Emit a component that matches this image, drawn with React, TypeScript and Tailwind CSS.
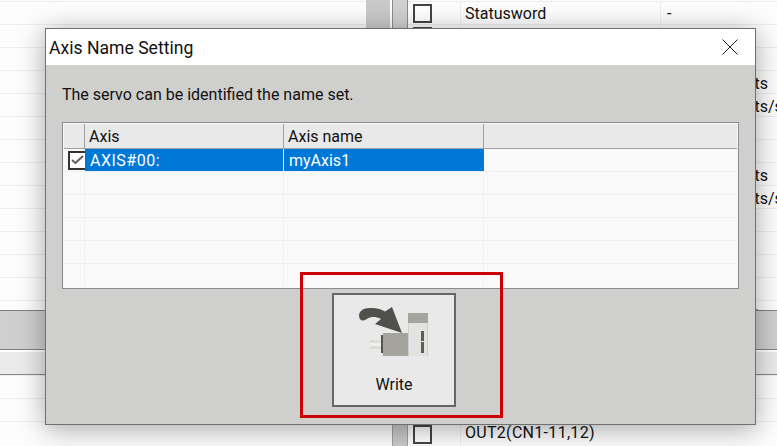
const FONT = "[font-family:Roboto,'Liberation_Sans',sans-serif]";

const TOP_ROWS: Record<number, string> = { 0: "Statusword" };
const UNIT_ROWS: Record<number, string> = { 3: "", 4: "/s", 7: "", 8: "/s" };

function Box() {
  return <span className="block h-[19px] w-[19px] border-2 border-[#444444] bg-white" />;
}

function SideRows({ count, first }: { count: number; first?: boolean }) {
  return (
    <div className={first ? "pt-px" : ""}>
      {Array.from({ length: count }).map((_, i) => (
        <div key={i} className="h-[23px] border-t border-[#eeeeee]" />
      ))}
    </div>
  );
}

function BackgroundTop() {
  return (
    <div className="flex h-[310px] overflow-hidden bg-[#fdfdfd]">
      <div className="w-[366px] shrink-0">
        <SideRows count={14} first />
      </div>
      <div className="w-[24px] shrink-0 bg-[#c9c9c9]" />
      <div className="w-[2px] shrink-0 bg-white" />
      <div className="w-[16px] shrink-0 border-x border-[#8d8d8d] bg-[#d0d0d0]" />
      <div className="w-[369px] shrink-0 pt-px">
        {Array.from({ length: 13 }).map((_, i) => (
          <div key={i} className={`flex h-[23px] border-t border-[#eeeeee] text-[16px] text-[#111111] ${i === 0 ? "leading-[24px]" : "leading-[26px]"}`}>
            <div className="flex w-[52px] shrink-0 items-center pl-[5px]">
              <Box />
            </div>
            <div className="w-[200px] shrink-0 border-l border-[#eeeeee] pl-[4px]">{TOP_ROWS[i]}</div>
            <div className="w-[117px] shrink-0 border-l border-[#eeeeee] pl-[6px] whitespace-nowrap">
              {i === 0 && "-"}
              {UNIT_ROWS[i] !== undefined && (
                <>
                  <span className="inline-block w-[101px] text-right">Pulse units</span>
                  {UNIT_ROWS[i]}
                </>
              )}
            </div>
          </div>
        ))}
        <div className="h-[10px] border-t border-[#eeeeee] pl-[347px] text-[16px] leading-[10px] text-[#111111]">.</div>
      </div>
    </div>
  );
}

function BackgroundBottom() {
  return (
    <div className="flex h-[71px] bg-[#fdfdfd]">
      <div className="w-[392px] shrink-0">
        <SideRows count={3} />
      </div>
      <div className="w-[16px] shrink-0 border-x border-[#a0a0a0] bg-[#c9c9c9]" />
      <div className="w-[369px] shrink-0 text-[16px] leading-[22px] text-[#111111]">
        <div className="h-[23px] border-t border-[#eeeeee]" />
        <div className="h-[23px] border-t border-[#eeeeee]" />
        <div className="flex h-[25px] border-t border-[#eeeeee]">
          <div className="flex w-[52px] shrink-0 items-start pt-[3px] pl-[5px]">
            <Box />
          </div>
          <div className="border-l border-[#eeeeee] pl-[4px] tracking-[0.3px] whitespace-nowrap">OUT2(CN1-11,12)</div>
        </div>
      </div>
    </div>
  );
}

function WriteIcon() {
  return (
    <svg width="90" height="65" viewBox="0 0 90 65" className="block shrink-0">
      <rect x="21" y="40" width="11" height="9" fill="#dcdcd8" />
      <rect x="21" y="43" width="11" height="3" fill="#f0f0ee" />
      <rect x="32" y="35" width="3" height="18" fill="#55554f" />
      <rect x="34" y="33" width="25" height="23" fill="#a4a39e" />
      <rect x="59" y="23" width="20" height="33" fill="#e2e2e0" />
      <rect x="59" y="23" width="1" height="33" fill="#cfcfcc" />
      <rect x="78" y="23" width="1" height="33" fill="#cfcfcc" />
      <rect x="59" y="13" width="20" height="10" fill="#a4a39e" />
      <rect x="72" y="31" width="3" height="10" fill="#5e5e59" />
      <rect x="72" y="42" width="3" height="11" fill="#5e5e59" />
      <path
        d="M10 15 C11 10 15 8.5 20 8 C27 7.5 32 9 36 11.5 L43 7 L53 33 L26 24 L32 19 C28 17 24 16.5 21 17.5 C18 18.5 16 21 13 20.5 C11 20 10 18 10 15 Z"
        fill="#50504c"
      />
    </svg>
  );
}

function AxisTable() {
  return (
    <div className="h-[167px] border border-[#8a8a90] bg-[#f9f9f9] p-px">
      <div className="flex h-[25px] border-b border-[#a0a0a0] bg-[#e9e9e9] text-[16px] leading-[26px] text-[#111111]">
        <div className="w-[21px] border-r border-[#a0a0a0]" />
        <div className="w-[199px] border-r border-[#a0a0a0] pl-[4px]">Axis</div>
        <div className="w-[200px] border-r border-[#a0a0a0] pl-[4px]">Axis name</div>
      </div>
      <div className="flex h-[23px] border-b border-[#f0f0f0] text-[16px] leading-[24px] text-white">
        <div className="flex w-[21px] items-center justify-end">
          <span className="flex h-[19px] w-[17px] items-center justify-center border-y-2 border-l-2 border-[#333333] bg-white">
            <svg width="13" height="10" viewBox="0 0 13 10">
              <path d="M1 5 L4.5 8 L12 1" fill="none" stroke="#5c5c5c" strokeWidth="2" />
            </svg>
          </span>
        </div>
        <div className="h-[22px] w-[199px] border-r border-[#e8eef5] bg-[#0078d7] pl-[5px] tracking-[0.5px]">AXIS#00:</div>
        <div className="h-[22px] w-[200px] bg-[#0078d7] pl-[5px]">myAxis1</div>
      </div>
      {[0, 1, 2, 3, 4].map((i) => (
        <div key={i} className="flex h-[23px] border-b border-[#f0f0f0] last:border-b-0">
          <div className="w-[21px] border-r border-[#f0f0f0]" />
          <div className="w-[199px] border-r border-[#f0f0f0]" />
          <div className="w-[200px] border-r border-[#f0f0f0]" />
        </div>
      ))}
    </div>
  );
}

export default function App() {
  return (
    <div className={`relative h-[446px] w-[777px] overflow-hidden bg-white ${FONT}`}>
      <BackgroundTop />
      <div className="h-[40px] border-y border-[#80808a] bg-[#cfcfcf]" />
      <div className="h-[25px] border-t-2 border-b border-t-white border-b-[#888888] bg-[#ebebeb]" />
      <BackgroundBottom />

      <div className="absolute top-[28px] left-[45px] flex h-[397px] w-[711px] flex-col border border-[#707070] shadow-[0_4px_26px_rgba(0,0,0,0.35)]">
        <div className="flex h-[36px] shrink-0 items-center justify-between bg-white pr-[17px] pl-[3px] text-[17.6px] text-[#111111]">
          <span className="pt-[2px]">Axis Name Setting</span>
          <svg width="16" height="16" viewBox="0 0 16 16">
            <path d="M0.5 0.5 L15.5 15.5 M15.5 0.5 L0.5 15.5" stroke="#222222" strokeWidth="1" />
          </svg>
        </div>
        <div className="flex flex-1 flex-col bg-[#cfcfcd] px-[16px]">
          <p className="h-[57px] pt-[19px] text-[16px] leading-[22px] text-[#111111]">The servo can be identified the name set.</p>
          <AxisTable />
          <div className="mt-[4px] ml-[270px] flex h-[114px] w-[124px] flex-col items-center self-start border-2 border-[#666666] bg-[#e9e9e9] text-[16px] text-[#111111]">
            <div className="mt-[5px]">
              <WriteIcon />
            </div>
            <span className="mt-[8px]">Write</span>
          </div>
        </div>
      </div>

      <div className="absolute top-[272px] left-[300px] h-[146px] w-[203px] border-[3px] border-[#cc0000]" />
    </div>
  );
}
